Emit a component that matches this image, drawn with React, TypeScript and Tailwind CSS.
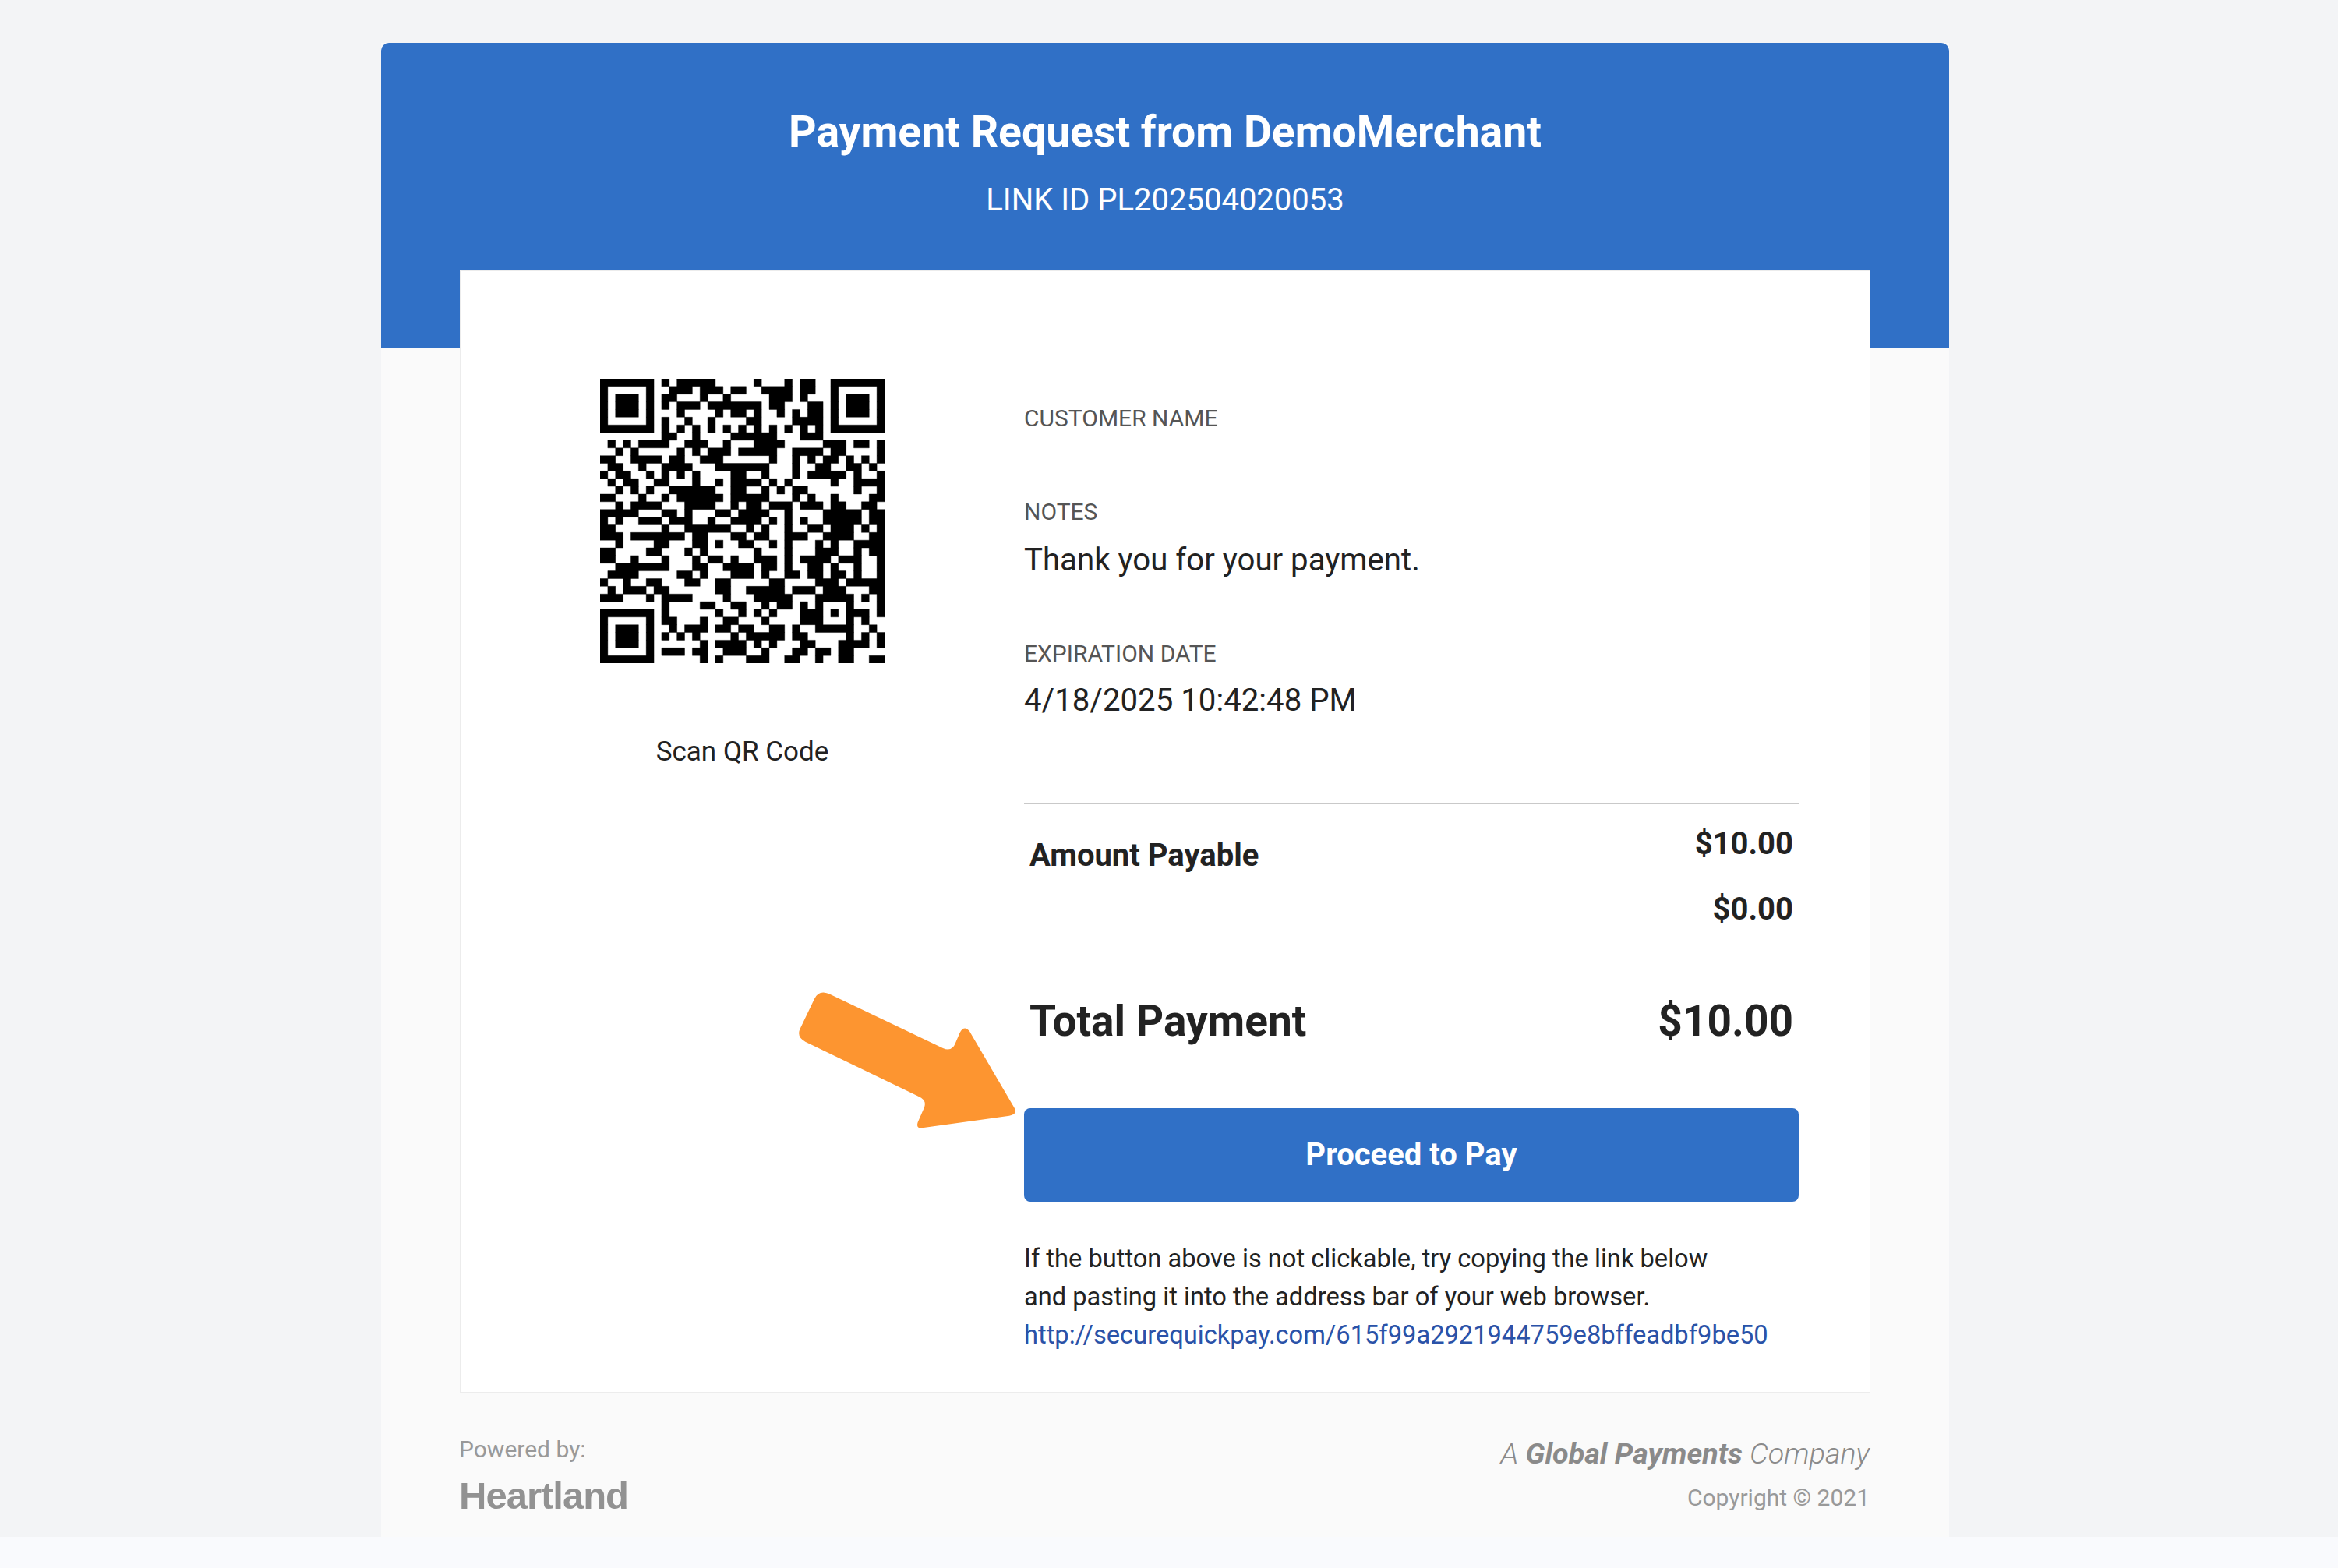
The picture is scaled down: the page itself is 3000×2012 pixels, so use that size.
import React from "react";

const QR_ROWS = [
  "0-6 8 10-14 20 24 26-27 30-36",
  "0 6 9-11 13-15 17-18 21-24 26-27 30 36",
  "0 2-4 6 8-9 13 16 22-24 26 30 32-34 36",
  "0 2-4 6 8 10-12 14-20 22-23 27-28 30 32-34 36",
  "0 2-4 6 10 15 17-18 20 23 25 27-28 30 32-34 36",
  "0 6 8 11 14 19-20 25-28 30 36",
  "0-6 8 10 12 14 16 18 20 22 24 26 28 30-36",
  "8-9 12 17-22 26-28",
  "1 3 5-8 11-13 16 20-23 29-31 33-34 36",
  "2 4 10 12 14-16 18-22 25-28 30-31 36",
  "0-1 4-7 9-10 13-15 22 25 27 29-30 32 34 36",
  "1-2 5 8-11 15-21 25 28-29 32-33 35",
  "0 2-3 6 8 10 12 17-18 21 25 27-31 33 36",
  "1 3-4 7-8 12 15 17-20 22 24 30 33-36",
  "2 4 6 9-14 17-18 21 23 25-26 33 36",
  "0-1 5 8 10-15 17-21 25 27 30 35-36",
  "2 4-7 11-14 17 19-20 22-24 26-28 30-31 34-35",
  "0-4 8-9 11 15-16 18-21 24 29-33 35-36",
  "0 2 5-7 9-11 14 17-20 22 24 26 29-33 35-36",
  "0-1 8 11-16 19 21 24 27-28 30-32 34 36",
  "0-2 4-10 12-13 17-18 20-21 24-26 29-32 35-36",
  "2 7-8 12-13 15 18-19 22 24 28 30 33-36",
  "0-1 6-7 11 13 20 24 28-30 33 35-36",
  "0-1 4 8 12 14-15 17 20-22 24 26-29 31-33 36",
  "2-8 12-13 16-19 21-22 24 27-28 30 33 36",
  "1-4 10-11 13 17-19 21 24-25 27-28 30-31 33 36",
  "0 3 6-7 11-12 15-16 22-23 28-30 32-36",
  "1 3-5 7-8 15-16 19-23 25-27 29-31 35-36",
  "0-2 6 8-11 16 20-24 28-32 34 36",
  "8 13-14 17-18 21 23-24 26 28 32 36",
  "0-6 8 15 18 20 22 26-28 30 32-34 36",
  "0 6 8-9 13 16-17 21 26-28 32 34",
  "0 2-4 6 9 11-13 15-16 18-19 22-23 25 28-32 35",
  "0 2-4 6 8 10 12 17 19-23 25-26 32 34 36",
  "0 2-4 6 13 15-18 20 22 26-27 31-34 36",
  "0 6 8-10 12-13 16-18 21 25-26 28-29 31-32",
  "0-6 13 15 19-21 24-25 28 31-32 35-36",
];

function qrPath() {
  let d = "";
  QR_ROWS.forEach((row, y) => {
    row.split(" ").forEach((part) => {
      const [a, b] = part.split("-").map(Number);
      const end = (b === undefined ? a : b) + 1;
      d += `M${a} ${y}H${end}V${y + 1}H${a}Z`;
    });
  });
  return d;
}

function QrCode() {
  return (
    <svg viewBox="0 0 37 37" className="block w-[365px] h-[365px]">
      <path d={qrPath()} fill="#000" stroke="#000" strokeWidth={0.04} />
    </svg>
  );
}

function Arrow() {
  return (
    <svg viewBox="0 0 1200 720" className="absolute left-[980px] top-[1240px] w-[400px] h-[240px]">
      <path
        d="M250 105L690 315Q725 330 738 295L755 255Q772 225 792 250L965 545Q978 570 945 575L610 622Q585 625 593 600L617 545Q630 515 595 500L160 290Q125 270 140 240L195 125Q212 90 250 105Z"
        fill="#fd9530"
      />
    </svg>
  );
}

export default function App() {
  return (
    <div className="relative h-[2012px] w-[3000px] overflow-hidden bg-[#f3f4f6] font-[Roboto,sans-serif] text-[#222]">
      <div className="pt-[55px] pl-[489px]">
        <div className="h-[1917px] w-[2012px] bg-[#fafafa]">
          <div className="h-[392px] rounded-t-[10px] bg-[#3070c6] pt-[75px] text-center text-white">
            <div className="text-[55.3px] font-bold leading-[80px]">Payment Request from DemoMerchant</div>
            <div className="mt-[22px] text-[40px] leading-[50px]">LINK ID PL202504020053</div>
          </div>
          <div className="mx-[101px] -mt-[100px] flex h-[1440px] border border-[#ececec] bg-white">
            <div className="flex w-[723px] flex-col items-center pt-[138px]">
              <QrCode />
              <div className="mt-[89px] text-[35px] leading-[50px]">Scan QR Code</div>
            </div>
            <div className="w-[994px] pt-[169px]">
              <div className="text-[30px] leading-[40px] text-[#555]">CUSTOMER NAME</div>
              <div className="mt-[80px] text-[30px] leading-[40px] text-[#555]">NOTES</div>
              <div className="mt-[12px] text-[40.2px] leading-[60px]">Thank you for your payment.</div>
              <div className="mt-[70px] text-[30px] leading-[40px] text-[#555]">EXPIRATION DATE</div>
              <div className="mt-[10px] text-[40.2px] leading-[60px]">4/18/2025 10:42:48 PM</div>
              <div className="mt-[102px] h-px bg-[#c9c9c9]" />
              <div className="flex justify-between px-[7px]">
                <div className="mt-[36px] text-[40px] font-bold leading-[60px]">Amount Payable</div>
                <div className="pt-[21px] text-right text-[40px] font-bold leading-[60px]">
                  <div>$10.00</div>
                  <div className="mt-[24px]">$0.00</div>
                </div>
              </div>
              <div className="mt-[73px] flex justify-between px-[7px] text-[55px] font-bold leading-[80px]">
                <div>Total Payment</div>
                <div>$10.00</div>
              </div>
              <div className="mt-[72px] flex h-[120px] items-center justify-center rounded-[8px] bg-[#3070c6] text-[40px] font-bold text-white">
                Proceed to Pay
              </div>
              <div className="mt-[49px] text-[32.65px] leading-[49px]">
                <div>If the button above is not clickable, try copying the link below</div>
                <div>and pasting it into the address bar of your web browser.</div>
                <div className="text-[#2a52a8]">http://securequickpay.com/615f99a2921944759e8bffeadbf9be50</div>
              </div>
            </div>
          </div>
          <div className="mx-[101px] flex justify-between pt-[53px]">
            <div className="-ml-[1px]">
              <div className="text-[30px] leading-[40px] text-[#999]">Powered by:</div>
              <div className="mt-[9px] font-['Liberation_Sans',sans-serif] text-[49px] font-bold leading-[60px] tracking-[-1px] text-[#929292]">
                Heartland
              </div>
            </div>
            <div className="pr-[1px] text-right">
              <div className="text-[37.7px] font-light italic leading-[50px] text-[#8a8a8a]">
                A <span className="font-bold">Global Payments</span> Company
              </div>
              <div className="mt-[12px] text-[30px] leading-[40px] text-[#999]">Copyright © 2021</div>
            </div>
          </div>
        </div>
      </div>
      <div className="h-[40px] bg-[#f9fafd]" />
      <Arrow />
    </div>
  );
}
